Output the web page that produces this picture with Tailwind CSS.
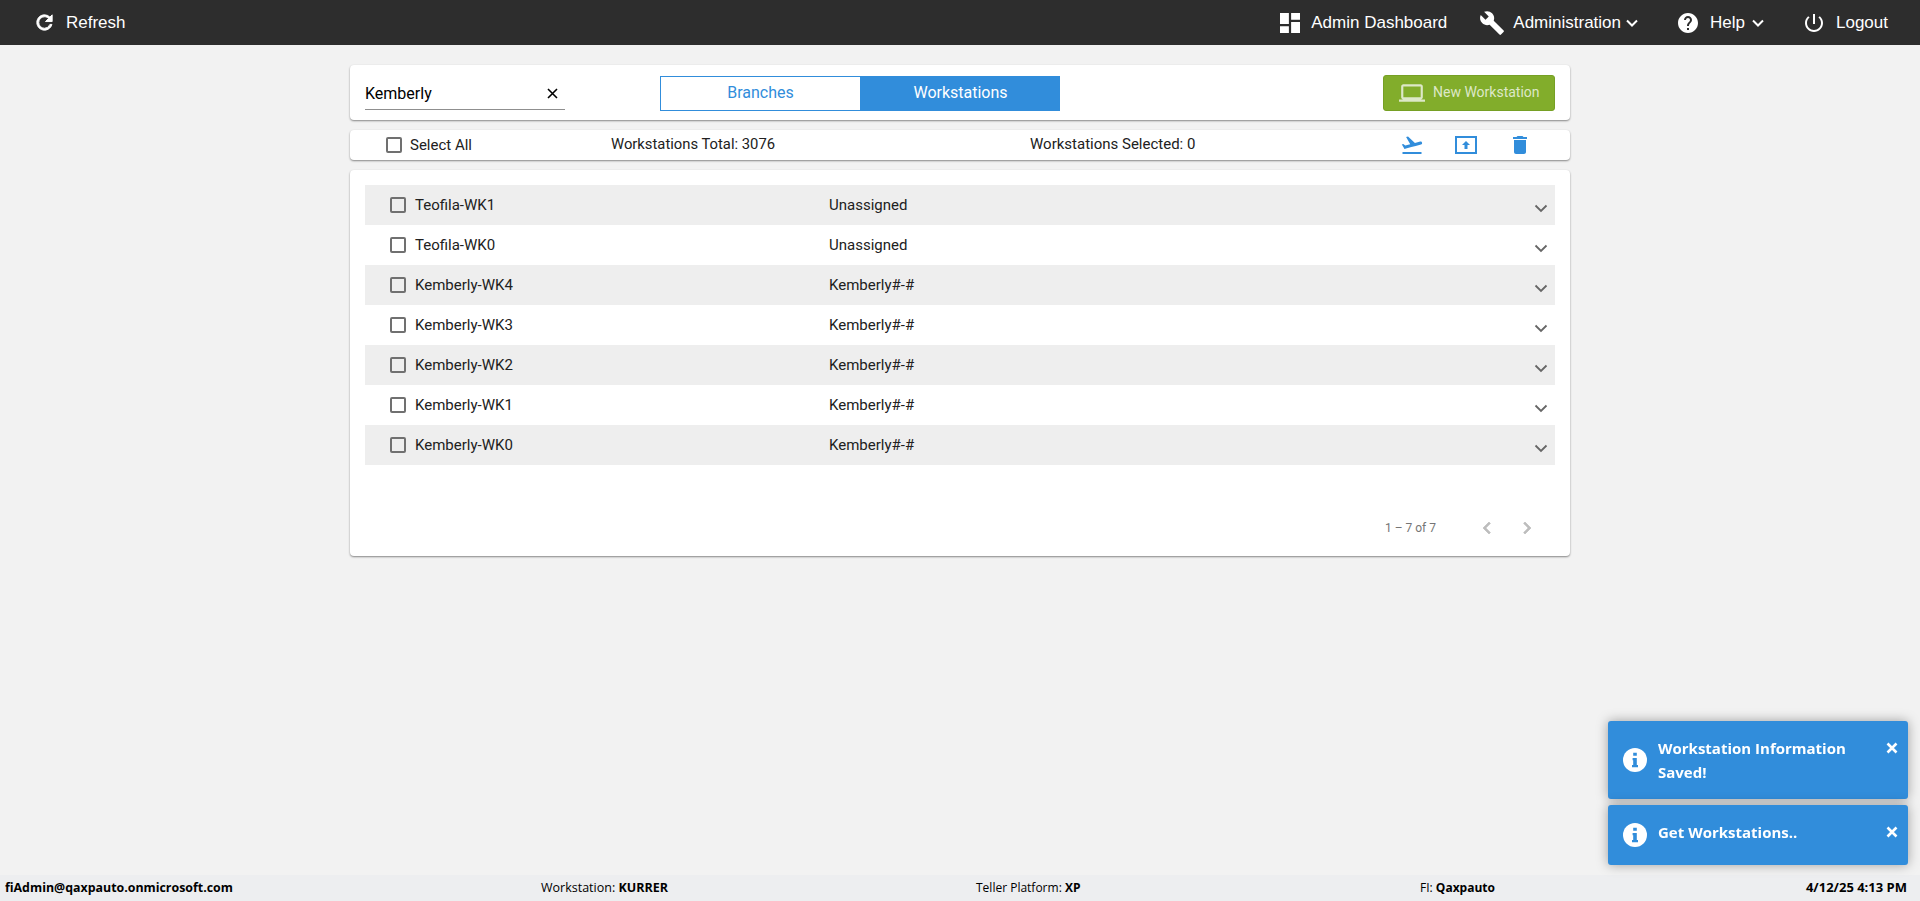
<!DOCTYPE html>
<html lang="en">
  <head>
    <meta charset="UTF-8" />
    <title>Workstations</title>
    <script src="https://cdn.jsdelivr.net/npm/@tailwindcss/browser@4"></script>
  </head>
  <body class="h-[901px] overflow-hidden flex flex-col bg-[#f2f2f2] font-['Roboto',sans-serif] text-[#212121]">
    <!-- top bar -->
    <header class="h-[45px] shrink-0 bg-[#2d2d2d] text-white flex items-center pl-[33px] pr-[32px] text-[17px] font-['Liberation_Sans',sans-serif]">
      <svg class="w-[23px] h-[23px] fill-white" viewBox="0 0 24 24"><path d="M17.65 6.35A7.958 7.958 0 0 0 12 4c-4.42 0-7.99 3.58-7.99 8s3.57 8 7.99 8c3.73 0 6.84-2.55 7.73-6h-2.08A5.99 5.99 0 0 1 12 18c-3.31 0-6-2.69-6-6s2.69-6 6-6c1.66 0 3.14.69 4.22 1.78L13 11h7V4l-2.35 2.35z" stroke="white" stroke-width="1"/></svg>
      <span class="ml-[10px]">Refresh</span>
      <div class="ml-auto flex items-center">
        <svg class="w-[20px] h-[20px] fill-white" viewBox="3 3 18 18"><path d="M3 13h8V3H3v10zm0 8h8v-6H3v6zm10 0h8V11h-8v10zm0-18v6h8V3h-8z"/></svg>
        <span class="ml-[11px]">Admin Dashboard</span>
        <svg class="ml-[32px] w-[26px] h-[26px] fill-white" viewBox="0 0 24 24"><path d="M22.7 19l-9.1-9.1c.9-2.3.4-5-1.5-6.9-2-2-5-2.4-7.4-1.3L9 6 6 9 1.6 4.7C.4 7.1.9 10.1 2.9 12.1c1.9 1.9 4.6 2.4 6.9 1.5l9.1 9.1c.4.4 1 .4 1.4 0l2.3-2.3c.5-.4.5-1.1.1-1.4z"/></svg>
        <span class="ml-[8px]">Administration</span>
        <svg class="ml-[3px] w-[16px] h-[16px] stroke-white fill-none" viewBox="0 0 16 16"><path d="M3 5.5l5 5 5-5" stroke-width="2"/></svg>
        <svg class="ml-[36px] w-[24px] h-[24px] fill-white" viewBox="0 0 24 24"><path d="M12 2C6.48 2 2 6.48 2 12s4.48 10 10 10 10-4.48 10-10S17.52 2 12 2zm1 17h-2v-2h2v2zm2.07-7.75l-.9.92C13.45 12.9 13 13.5 13 15h-2v-.5c0-1.1.45-2.1 1.17-2.83l1.24-1.26c.37-.36.59-.86.59-1.41 0-1.1-.9-2-2-2s-2 .9-2 2H8c0-2.21 1.79-4 4-4s4 1.79 4 4c0 .88-.36 1.68-.93 2.25z"/></svg>
        <span class="ml-[10px]">Help</span>
        <svg class="ml-[5px] w-[16px] h-[16px] stroke-white fill-none" viewBox="0 0 16 16"><path d="M3 5.5l5 5 5-5" stroke-width="2"/></svg>
        <svg class="ml-[36px] w-[24px] h-[24px] fill-white" viewBox="0 0 24 24"><path d="M13 3h-2v10h2V3zm4.83 2.17l-1.42 1.42C17.99 7.86 19 9.81 19 12c0 3.87-3.13 7-7 7s-7-3.13-7-7c0-2.19 1.01-4.14 2.58-5.42L6.17 5.17C4.23 6.82 3 9.26 3 12c0 4.97 4.03 9 9 9s9-4.03 9-9c0-2.74-1.23-5.18-3.17-6.83z"/></svg>
        <span class="ml-[10px]">Logout</span>
      </div>
    </header>

    <main class="flex-1 w-[1220px] mx-auto pt-[20px]">
      <!-- search + tabs -->
      <section class="h-[55px] bg-white rounded-[4px] shadow-[0_1px_2px_rgba(0,0,0,0.45)] flex items-center px-[15px]">
        <div class="w-[200px] h-[35px] mt-[-1px] pt-[4px] border-b border-[#8f8f8f] flex items-center justify-between text-[16px] text-black pr-[7px]">
          <span>Kemberly</span>
          <svg class="w-[11px] h-[11px] stroke-black" viewBox="0 0 11 11"><path d="M1 1l9 9M10 1l-9 9" stroke-width="1.6"/></svg>
        </div>
        <div class="ml-[95px] mt-[1px] flex h-[35px] w-[400px] text-[16px]">
          <div class="w-[201px] border border-[#318ddb] text-[#318ddb] flex items-center justify-center">Branches</div>
          <div class="w-[199px] bg-[#318ddb] text-white flex items-center justify-center">Workstations</div>
        </div>
        <button class="ml-auto w-[172px] h-[36px] bg-[#82ad2b] border border-[#76a024] rounded-[3px] flex items-center text-[14px] text-[#dde8c8] pl-[15px]">
          <svg class="w-[26px] h-[26px] fill-[#dde8c8]" viewBox="0 0 24 24"><path d="M20 18c1.1 0 1.99-.9 1.99-2L22 6c0-1.1-.9-2-2-2H4c-1.1 0-2 .9-2 2v10c0 1.1.9 2 2 2H0v2h24v-2h-4zM4 6h16v10H4V6z"/></svg>
          <span class="ml-[8px]">New Workstation</span>
        </button>
      </section>

      <!-- selection toolbar -->
      <section class="mt-[10px] h-[30px] bg-white rounded-[4px] shadow-[0_1px_2px_rgba(0,0,0,0.45)] flex items-center text-[15px] pl-[36px]">
        <span class="w-[16px] h-[16px] border-2 border-[#707070] rounded-[2px]"></span>
        <span class="ml-[8px] w-[201px]">Select All</span>
        <span class="w-[419px] -mt-[1px] text-[14.8px]">Workstations Total: 3076</span>
        <span class="w-[370px] -mt-[1px]">Workstations Selected: 0</span>
        <svg class="w-[24px] h-[24px] fill-[#318ddb]" viewBox="0 0 24 24"><path d="M2.5 19h19v2h-19zm19.57-9.36c-.21-.8-1.04-1.28-1.84-1.06L14.92 10l-6.9-6.43-1.93.51 4.14 7.17-4.97 1.33-1.97-1.54-1.45.39 1.82 3.16.77 1.33 1.6-.43 5.31-1.42 4.35-1.16L21 11.49c.81-.23 1.28-1.05 1.07-1.85z"/></svg>
        <svg class="ml-[30px] w-[24px] h-[20px] fill-[#318ddb]" viewBox="0 0 24 20"><path d="M1 1h22v18H1V1zm2 2v14h18V3H3z"/><path d="M12 6l4 4h-2.5v4h-3v-4H8z"/></svg>
        <svg class="ml-[30px] w-[24px] h-[24px] fill-[#318ddb]" viewBox="0 0 24 24"><path d="M6 19c0 1.1.9 2 2 2h8c1.1 0 2-.9 2-2V7H6v12zM19 4h-3.5l-1-1h-5l-1 1H5v2h14V4z"/></svg>
      </section>

      <!-- workstation list -->
      <section class="mt-[10px] h-[386px] bg-white rounded-[4px] shadow-[0_1px_2px_rgba(0,0,0,0.45)] px-[15px] pt-[15px] text-[15px]">
        <div class="h-[40px] bg-[#eeeeee] flex items-center pl-[25px] pr-[6px]">
          <span class="w-[16px] h-[16px] border-2 border-[#707070] rounded-[2px]"></span>
          <span class="ml-[9px] w-[414px]">Teofila-WK1</span><span>Unassigned</span>
          <svg class="ml-auto mt-[6px] w-[16px] h-[16px] stroke-[#666] fill-none" viewBox="0 0 16 16"><path d="M2.5 5.5l5.5 5.5 5.5-5.5" stroke-width="1.8"/></svg>
        </div>
        <div class="h-[40px] flex items-center pl-[25px] pr-[6px]">
          <span class="w-[16px] h-[16px] border-2 border-[#707070] rounded-[2px]"></span>
          <span class="ml-[9px] w-[414px]">Teofila-WK0</span><span>Unassigned</span>
          <svg class="ml-auto mt-[6px] w-[16px] h-[16px] stroke-[#666] fill-none" viewBox="0 0 16 16"><path d="M2.5 5.5l5.5 5.5 5.5-5.5" stroke-width="1.8"/></svg>
        </div>
        <div class="h-[40px] bg-[#eeeeee] flex items-center pl-[25px] pr-[6px]">
          <span class="w-[16px] h-[16px] border-2 border-[#707070] rounded-[2px]"></span>
          <span class="ml-[9px] w-[414px]">Kemberly-WK4</span><span>Kemberly#-#</span>
          <svg class="ml-auto mt-[6px] w-[16px] h-[16px] stroke-[#666] fill-none" viewBox="0 0 16 16"><path d="M2.5 5.5l5.5 5.5 5.5-5.5" stroke-width="1.8"/></svg>
        </div>
        <div class="h-[40px] flex items-center pl-[25px] pr-[6px]">
          <span class="w-[16px] h-[16px] border-2 border-[#707070] rounded-[2px]"></span>
          <span class="ml-[9px] w-[414px]">Kemberly-WK3</span><span>Kemberly#-#</span>
          <svg class="ml-auto mt-[6px] w-[16px] h-[16px] stroke-[#666] fill-none" viewBox="0 0 16 16"><path d="M2.5 5.5l5.5 5.5 5.5-5.5" stroke-width="1.8"/></svg>
        </div>
        <div class="h-[40px] bg-[#eeeeee] flex items-center pl-[25px] pr-[6px]">
          <span class="w-[16px] h-[16px] border-2 border-[#707070] rounded-[2px]"></span>
          <span class="ml-[9px] w-[414px]">Kemberly-WK2</span><span>Kemberly#-#</span>
          <svg class="ml-auto mt-[6px] w-[16px] h-[16px] stroke-[#666] fill-none" viewBox="0 0 16 16"><path d="M2.5 5.5l5.5 5.5 5.5-5.5" stroke-width="1.8"/></svg>
        </div>
        <div class="h-[40px] flex items-center pl-[25px] pr-[6px]">
          <span class="w-[16px] h-[16px] border-2 border-[#707070] rounded-[2px]"></span>
          <span class="ml-[9px] w-[414px]">Kemberly-WK1</span><span>Kemberly#-#</span>
          <svg class="ml-auto mt-[6px] w-[16px] h-[16px] stroke-[#666] fill-none" viewBox="0 0 16 16"><path d="M2.5 5.5l5.5 5.5 5.5-5.5" stroke-width="1.8"/></svg>
        </div>
        <div class="h-[40px] bg-[#eeeeee] flex items-center pl-[25px] pr-[6px]">
          <span class="w-[16px] h-[16px] border-2 border-[#707070] rounded-[2px]"></span>
          <span class="ml-[9px] w-[414px]">Kemberly-WK0</span><span>Kemberly#-#</span>
          <svg class="ml-auto mt-[6px] w-[16px] h-[16px] stroke-[#666] fill-none" viewBox="0 0 16 16"><path d="M2.5 5.5l5.5 5.5 5.5-5.5" stroke-width="1.8"/></svg>
        </div>
        <div class="mt-[51px] flex items-center justify-end pr-[16px] text-[12px] text-[#757575]">
          <span>1 – 7 of 7</span>
          <svg class="ml-[39px] w-[24px] h-[24px] fill-[#bdbdbd] stroke-[#bdbdbd]" viewBox="0 0 24 24"><path d="M15.41 7.41L14 6l-6 6 6 6 1.41-1.41L10.83 12z" stroke-width="0.7"/></svg>
          <svg class="ml-[16px] w-[24px] h-[24px] fill-[#bdbdbd] stroke-[#bdbdbd]" viewBox="0 0 24 24"><path d="M10 6L8.59 7.41 13.17 12l-4.58 4.59L10 18l6-6z" stroke-width="0.7"/></svg>
        </div>
      </section>
    </main>

    <!-- status bar -->
    <footer class="h-[26px] shrink-0 bg-[#edeef0] flex items-center pl-[5px] pr-[13px] text-[12px] text-black font-['Open_Sans',sans-serif]">
      <b class="w-[536px] text-[12.4px]">fiAdmin@qaxpauto.onmicrosoft.com</b>
      <span class="w-[435px] text-[12.5px]">Workstation: <b>KURRER</b></span>
      <span class="w-[444px]">Teller Platform: <b>XP</b></span>
      <span>FI: <b>Qaxpauto</b></span>
      <b class="ml-auto text-[13px]">4/12/25 4:13 PM</b>
    </footer>

    <!-- toasts -->
    <div class="fixed left-[1608px] top-[721px] w-[300px] flex flex-col gap-[6px] text-white font-['Open_Sans',sans-serif] font-bold text-[15px]">
      <div class="h-[78px] bg-[#318ddb] rounded-[3px] shadow-[0_0_12px_rgba(0,0,0,0.35)] flex items-start pl-[15px] pr-[10px]">
        <svg class="mt-[27px] w-[24px] h-[24px] shrink-0" viewBox="0 0 24 24"><circle cx="12" cy="12" r="12" fill="white"/><path fill="#318ddb" d="M10.2 4.8h3.6v3h-3.6zM9.6 10h4.2v7h1.2v2.2H9V17h1.2v-4.8H9.6z"/></svg>
        <p class="ml-[11px] mt-[15px] w-[215px] leading-[24px]">Workstation Information Saved!</p>
        <svg class="ml-auto mt-[21px] w-[12px] h-[12px] stroke-white" viewBox="0 0 12 12"><path d="M1.5 1.5l9 9M10.5 1.5l-9 9" stroke-width="2.6"/></svg>
      </div>
      <div class="h-[60px] bg-[#318ddb] rounded-[3px] shadow-[0_0_12px_rgba(0,0,0,0.35)] flex items-start pl-[15px] pr-[10px]">
        <svg class="mt-[18px] w-[24px] h-[24px] shrink-0" viewBox="0 0 24 24"><circle cx="12" cy="12" r="12" fill="white"/><path fill="#318ddb" d="M10.2 4.8h3.6v3h-3.6zM9.6 10h4.2v7h1.2v2.2H9V17h1.2v-4.8H9.6z"/></svg>
        <p class="ml-[11px] mt-[15px] leading-[24px]">Get Workstations..</p>
        <svg class="ml-auto mt-[21px] w-[12px] h-[12px] stroke-white" viewBox="0 0 12 12"><path d="M1.5 1.5l9 9M10.5 1.5l-9 9" stroke-width="2.6"/></svg>
      </div>
    </div>
  </body>
</html>
